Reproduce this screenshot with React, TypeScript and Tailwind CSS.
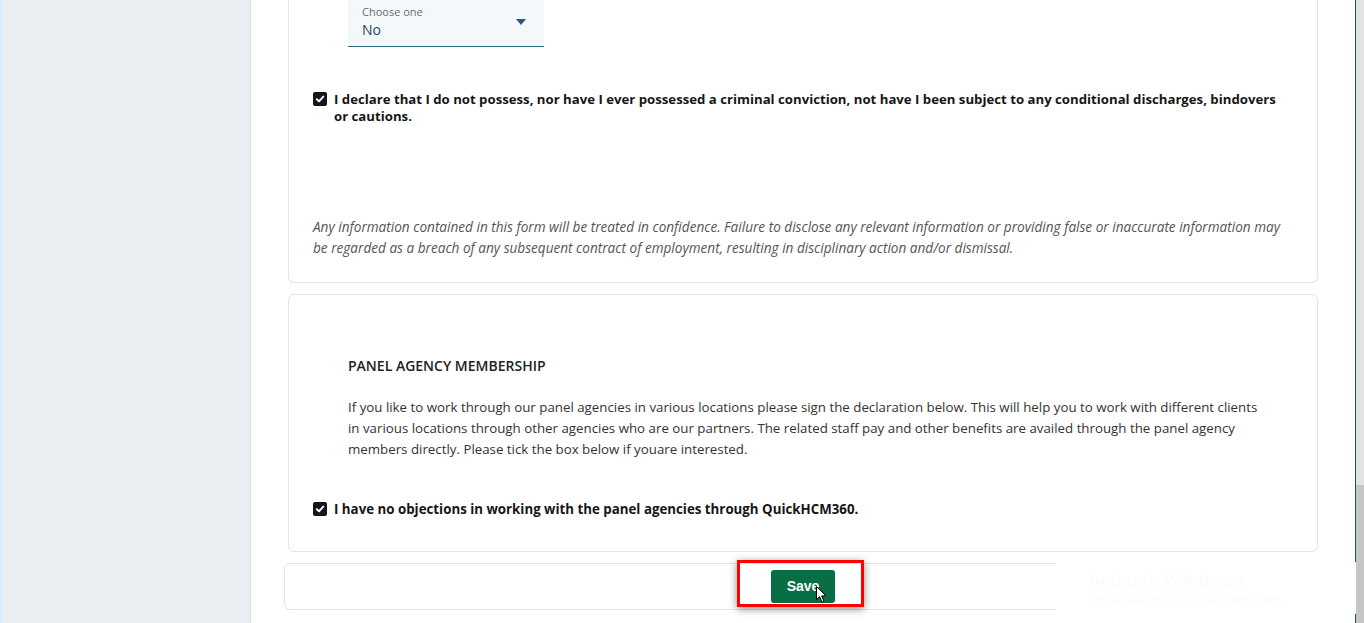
import React from "react";

function Check() {
  return (
    <span className="flex h-[14px] w-[14px] shrink-0 items-center justify-center rounded-[2px] bg-[#161616]">
      <svg width="10" height="10" viewBox="0 0 10 10">
        <path d="M1.8 5.2 L4 7.3 L8.3 2.6" fill="none" stroke="#fff" strokeWidth="1.9" strokeLinecap="round" strokeLinejoin="round" />
      </svg>
    </span>
  );
}

export default function App() {
  const font = { fontFamily: '"Open Sans", "Noto Sans", sans-serif' };
  return (
    <div className="flex h-[623px] w-[1364px] overflow-hidden bg-white" style={font}>
      <div className="h-full w-[251px] shrink-0 border-l-2 border-l-[#d2f1fd] border-r border-r-[#dde1e6] bg-[#eaeef3]" />
      <div className="relative flex-1 bg-white">
        <div className="ml-[37px] mr-[37px] rounded-b-[6px] border border-t-0 border-[#e4e4e4] pb-[24px]">
          <div className="ml-[59px] flex h-[47px] w-[196px] flex-col border-b-[1.5px] border-[#2c6b88] bg-[#f4f8fb] pl-[14px] pt-[5px]">
            <span className="text-[11px] leading-[14px] text-[#6b6b6b]">Choose one</span>
            <div className="mt-[1px] flex items-center justify-between pr-[18px]">
              <span className="text-[14px] leading-[20px] text-[#1e4a5e]">No</span>
              <svg width="10" height="6" viewBox="0 0 10 6" className="-mt-[16px]">
                <path d="M0 0 L10 0 L5 6 Z" fill="#1f5f7a" />
              </svg>
            </div>
          </div>
          <div className="ml-[24px] mt-[44px] flex items-start gap-[7px] pr-[26px]">
            <div className="mt-[1px]"><Check /></div>
            <p className="text-[13.2px] font-bold leading-[17px] text-[#161616]">
              I declare that I do not possess, nor have I ever possessed a criminal conviction, not have I been subject to any conditional discharges, bindovers or cautions.
            </p>
          </div>
          <p className="ml-[24px] mr-[20px] mt-[91px] text-[13.6px] italic leading-[21px] text-[#555]">
            Any information contained in this form will be treated in confidence. Failure to disclose any relevant information or providing false or inaccurate information may be regarded as a breach of any subsequent contract of employment, resulting in disciplinary action and/or dismissal.
          </p>
        </div>

        <div className="ml-[37px] mr-[37px] mt-[11px] rounded-[6px] border border-[#e4e4e4] pb-[33px] pt-[61px]">
          <h3 className="ml-[59px] text-[14px] font-semibold leading-[20px] text-[#222]">PANEL AGENCY MEMBERSHIP</h3>
          <p className="ml-[59px] mr-[56px] mt-[21px] text-[13.3px] leading-[21px] text-[#333]">
            If you like to work through our panel agencies in various locations please sign the declaration below. This will help you to work with different clients in various locations through other agencies who are our partners. The related staff pay and other benefits are availed through the panel agency members directly. Please tick the box below if youare interested.
          </p>
          <div className="ml-[24px] mt-[41px] flex items-start gap-[7px]">
            <div className="mt-[1px]"><Check /></div>
            <p className="text-[13.3px] font-bold leading-[17px] text-[#161616]">
              I have no objections in working with the panel agencies through QuickHCM360.
            </p>
          </div>
        </div>

        <div className="relative ml-[33px] mr-[33px] mt-[11px] flex h-[47px] items-center justify-center rounded-[6px] border border-[#e4e4e4]">
          <div className="relative">
            <button className="h-[33px] w-[64px] rounded-[3px] bg-[#0a6e45] text-[14px] font-bold text-white" style={{ fontFamily: '"Liberation Sans", sans-serif' }}>
              Save
            </button>
            <div className="pointer-events-none absolute -left-[34px] -top-[10px] h-[47px] w-[127px] border-[3px] border-[#ff0000] shadow-[0_2px_8px_rgba(0,0,0,0.45)]" />
            <svg className="absolute left-[45px] top-[16px]" width="12" height="18" viewBox="0 0 12 18">
              <path d="M0.5 0.5 L0.5 13.5 L3.6 10.6 L5.8 15.8 L7.8 14.9 L5.7 9.9 L10 9.9 Z" fill="#fff" stroke="#000" strokeWidth="1" strokeLinejoin="round" />
            </svg>
          </div>
          <div className="absolute -right-[35px] -top-[2px] flex h-[52px] w-[300px] flex-col justify-center bg-white pl-[33px]">
            <span className="text-[19px] leading-[24px] text-[#fbfbfb]">Activate Windows</span>
            <span className="text-[12px] leading-[16px] text-[#fbfbfb]">Go to Settings to activate Windows.</span>
          </div>
        </div>
      </div>
      <div className="h-full w-[1px] shrink-0 bg-[#1d4f6e]" />
      <div className="flex h-full w-[8px] shrink-0 flex-col bg-[#e3e3e3]">
        <div className="mt-[485px] flex-1 bg-[#c6c6c6]" />
      </div>
    </div>
  );
}
